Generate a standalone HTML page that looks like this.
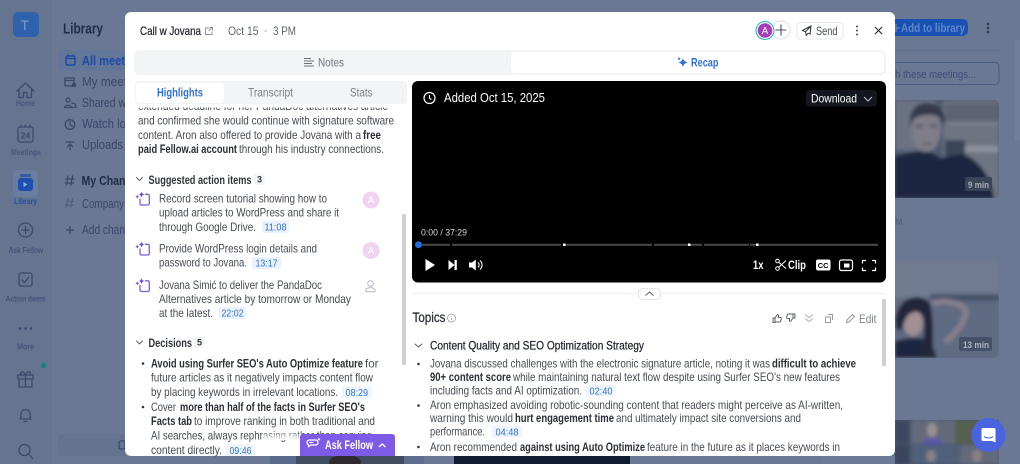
<!DOCTYPE html>
<html><head><meta charset="utf-8"><title>Call w Jovana</title>
<style>
html,body{margin:0;padding:0;width:1020px;height:464px;overflow:hidden;background:#6a7893}
svg{display:block;font-family:"Liberation Sans",sans-serif}
.b{font-size:11.8px;fill:#464b53}
.k{font-size:11.8px;fill:#2b2f36;font-weight:700}
.c{font-size:10px;fill:#2f73d9}
.s{font-size:11.8px;fill:#30343b;font-weight:700}
.r{font-size:8.500px;fill:#45557a;font-weight:700}
.n{font-size:12.500px;fill:#38476a}
.i{fill:none;stroke:#3b4a6c;stroke-width:1.3;stroke-linecap:round;stroke-linejoin:round}
.m{fill:none;stroke:#5a5f68;stroke-width:1;stroke-linecap:round;stroke-linejoin:round}
.p{fill:none;stroke:#7a5be6;stroke-width:1.3;stroke-linecap:round;stroke-linejoin:round}
.w{fill:none;stroke:#fff;stroke-width:1.2;stroke-linecap:round;stroke-linejoin:round}
.h{stroke-width:.25}
</style></head><body>
<svg width="1020" height="464" viewBox="0 0 1020 464" xmlns="http://www.w3.org/2000/svg">
<defs>
<filter id="bl" x="-20%" y="-20%" width="140%" height="140%"><feGaussianBlur stdDeviation="1.800"/></filter>
<clipPath id="t1"><rect x="800" y="100" width="199" height="98" rx="5"/></clipPath>
<clipPath id="t2"><rect x="800" y="260" width="199" height="98" rx="5"/></clipPath>
<clipPath id="t3"><rect x="800" y="420" width="199" height="44"/></clipPath>
<clipPath id="lc"><rect x="125" y="107.500" width="277" height="349"/></clipPath>
<clipPath id="rc"><rect x="412" y="300" width="470" height="156"/></clipPath>
<linearGradient id="fd" x1="0" y1="0" x2="0" y2="1"><stop offset="0" stop-color="#fff" stop-opacity="0"/><stop offset="1" stop-color="#fff"/></linearGradient>
</defs>

<!-- background -->
<rect width="1020" height="464" fill="#6a7893"/>
<rect width="52" height="464" fill="#65748f"/>

<!-- rail -->
<rect x="13" y="12" width="26" height="25" rx="5" fill="#2f62ad"/>
<text x="20.500" y="30" font-size="14" fill="#7f9bc9">T</text>
<path class="i" d="M17 91l8.500-8 8.500 8M19 89v8.500h4.500v-5h3.500v5h4.500V89"/>
<text class="r" x="16" y="106" textLength="19" lengthAdjust="spacingAndGlyphs">Home</text>
<rect x="18" y="127" width="15" height="15" rx="2" class="i"/>
<path class="i" d="M21 125v2M25.500 125v2M30 125v2"/>
<text x="25.500" y="138.500" font-size="8.500" fill="#3b4a6c" text-anchor="middle" font-weight="700">24</text>
<text class="r" x="11" y="155" textLength="30" lengthAdjust="spacingAndGlyphs">Meetings</text>
<rect x="13" y="170" width="25" height="27" rx="5" fill="#6a7ca0"/>
<rect x="18" y="178" width="15" height="13" rx="3" fill="#1d4fae"/>
<rect x="20" y="174" width="11" height="3" rx="1" fill="#3a5b9c"/>
<path d="M23.500 182v5l4-2.500z" fill="#8fb0e8"/>
<text x="14" y="204" font-size="8.500" fill="#1f4ea8" font-weight="700" textLength="23" lengthAdjust="spacingAndGlyphs">Library</text>
<circle cx="25.500" cy="230" r="7" class="i"/><path class="i" d="M25.500 226.500v7M22 230h7"/>
<text class="r" x="8.500" y="253" textLength="34.500" lengthAdjust="spacingAndGlyphs">Ask Fellow</text>
<rect x="19" y="273" width="13" height="13" rx="2" class="i"/><path class="i" d="M22 280l2.500 2.500 4-5"/>
<text class="r" x="5.500" y="301.500" textLength="40" lengthAdjust="spacingAndGlyphs">Action items</text>
<circle cx="20" cy="328.500" r="1.300" fill="#3b4a6c"/><circle cx="25.500" cy="328.500" r="1.300" fill="#3b4a6c"/><circle cx="31" cy="328.500" r="1.300" fill="#3b4a6c"/>
<text class="r" x="17" y="349.500" textLength="17" lengthAdjust="spacingAndGlyphs">More</text>
<circle cx="43.500" cy="365.500" r="2.700" fill="#148578"/>
<path class="i" d="M18 375h15v4H18zM19 379v8h13v-8M25.500 375v12M25.500 375c-2-5-7-3-4 0M25.500 375c2-5 7-3 4 0"/>
<path class="i" d="M20 419c1-1 1-2 1-5a4.500 4.500 0 0 1 9 0c0 3 0 4 1 5zM24 421.500h3"/>
<circle cx="24.500" cy="450" r="5.500" class="i"/><path class="i" d="M28.500 454l4 4.500"/>

<!-- library column -->
<text x="63" y="33.500" font-size="14.500" font-weight="700" fill="#1f2c4a" textLength="40" lengthAdjust="spacingAndGlyphs">Library</text>
<rect x="58" y="50" width="67" height="21" rx="5" fill="#627699"/>
<rect x="66" y="56" width="9" height="9" rx="1.500" fill="none" stroke="#1c4aa3" stroke-width="1.400"/>
<path d="M66 58.500h9M68 54.500v2M73 54.500v2" stroke="#1c4aa3" stroke-width="1.200"/>
<text x="82" y="65" font-size="12.500" font-weight="700" fill="#1c4aa3" textLength="46" lengthAdjust="spacingAndGlyphs">All meeti</text>
<path class="i" d="M65 78h9v8h-9zM65 80.500h9"/><circle cx="74" cy="85" r="2.300" fill="#3b4a6c"/>
<text class="n" x="82" y="86" textLength="45" lengthAdjust="spacingAndGlyphs">My meet</text>
<circle cx="68" cy="100" r="2" class="i"/><path class="i" d="M64.500 107.500c0-3 7-3 7 0zM72 103c3 0 4 2 4 4.500h-4"/>
<text class="n" x="82" y="107" textLength="44" lengthAdjust="spacingAndGlyphs">Shared w</text>
<circle cx="70" cy="124.500" r="4.800" class="i"/><path class="i" d="M70 121.500v3.500l2.300 1.300"/>
<text class="n" x="82" y="128" textLength="44" lengthAdjust="spacingAndGlyphs">Watch lo</text>
<path class="i" d="M66 142h8M70 150v-6M67.500 146.500l2.500-2.500 2.500 2.500"/>
<text class="n" x="82" y="149" textLength="41" lengthAdjust="spacingAndGlyphs">Uploads</text>
<path class="i" d="M68 176l-1.500 9M72.500 176l-1.500 9M65.500 179h8.500M65 183h8.500" stroke-width="1.400"/>
<text x="81.500" y="185" font-size="12.500" font-weight="700" fill="#1f2c4a" textLength="44" lengthAdjust="spacingAndGlyphs">My Chan</text>
<path d="M68 198.500l-1.500 9M72.500 198.500l-1.500 9M65.500 201.500h8.500M65 205h8.500" fill="none" stroke="#52617f" stroke-width="1.200"/>
<text class="n" x="82" y="208" textLength="42" lengthAdjust="spacingAndGlyphs">Company</text>
<path class="i" d="M70 226.500v7M66.500 230h7"/>
<text class="n" x="82" y="234" textLength="43" lengthAdjust="spacingAndGlyphs">Add chan</text>
<rect x="58" y="434" width="70" height="22" rx="4" fill="#65748e"/>
<rect x="119" y="441" width="6" height="8" rx="1.500" class="i"/>

<!-- right background -->
<rect x="880" y="19" width="88" height="17" rx="5" fill="#1a52b4"/>
<text x="901" y="32" font-size="11.500" font-weight="700" fill="#5f86c8" textLength="64" lengthAdjust="spacingAndGlyphs">Add to library</text>
<path d="M896 24v8M892 28h8" stroke="#5f86c8" stroke-width="1.300"/>
<circle cx="988" cy="24" r="1.300" fill="#2c3a58"/><circle cx="988" cy="28" r="1.300" fill="#2c3a58"/><circle cx="988" cy="32" r="1.300" fill="#2c3a58"/>
<rect x="895" y="50" width="105" height="1" fill="#63718c"/>
<rect x="880" y="62.500" width="119" height="22" rx="4" fill="#6a7893" stroke="#475d85" stroke-width="1"/>
<text x="895" y="78" font-size="11" fill="#3b4e76" textLength="81" lengthAdjust="spacingAndGlyphs">h these meetings...</text>
<rect x="1015" y="40" width="5" height="100" fill="#707e98"/>

<!-- thumb 1 -->
<g clip-path="url(#t1)">
<rect x="800" y="100" width="199" height="98" fill="#4e5a70"/>
<g filter="url(#bl)">
<rect x="895" y="100" width="40" height="50" fill="#6a7284"/>
<rect x="943" y="100" width="56" height="98" fill="#6d7482"/>
<rect x="945" y="103" width="54" height="20" fill="#5d6472"/>
<rect x="945" y="122" width="54" height="3" fill="#7d838f"/>
<rect x="962" y="146" width="37" height="6" fill="#8c929c"/>
<rect x="945" y="140" width="20" height="30" fill="#3a4458"/>
<path d="M895 198v-42c10-2 20-4 32-6l13 8 22-4c18 5 30 26 32 44z" fill="#1f2740"/>
<ellipse cx="926" cy="130" rx="15" ry="22" fill="#7e7d88"/>
<path d="M910 128c-2-20 8-25 17-25s20 5 18 25c-2-12-8-13-17-13s-16 2-18 13z" fill="#343b4e"/>
<rect x="916" y="125" width="7" height="2" fill="#3c4150"/><rect x="930" y="125" width="7" height="2" fill="#3c4150"/>
<rect x="923" y="143" width="9" height="2" fill="#565462"/>
</g>
<rect x="965" y="177" width="27" height="14" rx="2" fill="#3a4458"/>
<text x="968" y="188" font-size="9.500" font-weight="700" fill="#a9aeb9" textLength="21" lengthAdjust="spacingAndGlyphs">9 min</text>
</g>
<text x="895" y="225" font-size="9" fill="#4c5c80">M</text>

<!-- thumb 2 -->
<g clip-path="url(#t2)">
<rect x="800" y="260" width="199" height="98" fill="#6b7890"/>
<g filter="url(#bl)">
<rect x="895" y="260" width="104" height="38" fill="#6f7b92"/>
<rect x="895" y="298" width="104" height="62" fill="#5f6b83"/>
<rect x="930" y="294" width="69" height="7" fill="#465269"/>
<path d="M895 358v-17c12-4 26-4 36 0l6 17z" fill="#1f2840"/>
<ellipse cx="913" cy="322" rx="10" ry="14" fill="#a08f93"/>
<path d="M897 330c-5-15 4-33 20-33 10 1 13 5 14 10 3 16 2 35 1 50h-9c-2-10 2-22 1-32 0-8-4-15-10-13-8 2-10 10-12 18z" fill="#23273a"/>
<path d="M932 303c13-3 27-1 33 6 3 9-8 24-20 33" fill="none" stroke="#857f8c" stroke-width="6"/>
</g>
<rect x="959" y="337" width="33" height="14" rx="2" fill="#465169"/>
<text x="963" y="348" font-size="9.500" font-weight="700" fill="#aeb3bd" textLength="26" lengthAdjust="spacingAndGlyphs">13 min</text>
</g>

<!-- thumb 3 grid -->
<g clip-path="url(#t3)">
<rect x="895" y="420" width="104" height="44" fill="#4a5670"/>
<g filter="url(#bl)">
<rect x="895" y="420" width="15" height="24" fill="#3d4a62"/>
<rect x="911" y="420" width="44" height="24" fill="#646a7c"/>
<rect x="955" y="420" width="44" height="24" fill="#55604f"/>
<rect x="895" y="445" width="15" height="19" fill="#3a455c"/>
<rect x="911" y="445" width="48" height="19" fill="#50607a"/>
<rect x="960" y="445" width="39" height="19" fill="#636a7a"/>
<ellipse cx="932" cy="430" rx="5" ry="7" fill="#9a8f92"/>
<path d="M922 444c3-8 18-8 22 0z" fill="#5a55a8"/>
<ellipse cx="931" cy="456" rx="5" ry="6" fill="#8a8085"/>
<ellipse cx="977" cy="456" rx="5" ry="6" fill="#8a8085"/>
</g>
</g>
<!-- bottom strip behind modal -->
<rect x="270" y="456" width="26" height="8" fill="#5a6a8a"/>
<rect x="296" y="456" width="108" height="8" fill="#424c60"/>
<ellipse cx="345" cy="462" rx="16" ry="7" fill="#2f2a30"/>
<rect x="404" y="456" width="20" height="8" fill="#5d6d8e"/>
<rect x="454" y="456" width="176" height="8" fill="#0f1a33"/>
<rect x="822" y="456" width="73" height="8" fill="#6c7a96"/>

<!-- modal -->
<rect x="125" y="12" width="770" height="444" rx="6" fill="#fff"/>

<!-- header -->
<text class="h" x="140" y="35" font-size="12" fill="#24282f" stroke="#24282f" textLength="61" lengthAdjust="spacingAndGlyphs">Call w Jovana</text>
<path d="M209 28h-3.500v6.500h6.500v-3M208.500 31l3.500-3.500M209.500 27.500h3v3" fill="none" stroke="#8b9097" stroke-width=".9"/>
<text x="228" y="35" font-size="12" fill="#60656d" textLength="30.500" lengthAdjust="spacingAndGlyphs">Oct 15</text>
<circle cx="265.500" cy="31" r="1" fill="#c3c6cb"/>
<text x="273" y="35" font-size="12" fill="#60656d" textLength="23" lengthAdjust="spacingAndGlyphs">3 PM</text>

<circle cx="781" cy="30" r="9" fill="#fff" stroke="#dfe1e5"/>
<path d="M775.500 30h11M781 24.500v11" stroke="#4b5058" stroke-width="1.100"/>
<circle cx="765" cy="30.500" r="9.500" fill="#2bb8b0"/>
<circle cx="765" cy="30.500" r="8.400" fill="#fff"/>
<circle cx="765" cy="30.500" r="7.300" fill="#a83cbe"/>
<text x="765" y="34.200" font-size="10" fill="#fff" text-anchor="middle">A</text>
<rect x="797" y="22.500" width="46" height="16.500" rx="3.500" fill="#fff" stroke="#e6e8eb"/>
<path d="M811 26l-8.500 4.500 3 1.300.8 3.700 1.800-2.300 2 .8zM805.500 31.800L811 26" fill="none" stroke="#2f333a" stroke-width="1"/>
<text x="816" y="35" font-size="12" fill="#4c5158" textLength="21.500" lengthAdjust="spacingAndGlyphs">Send</text>
<circle cx="857" cy="26.500" r="1" fill="#41464d"/><circle cx="857" cy="30.500" r="1" fill="#41464d"/><circle cx="857" cy="34.500" r="1" fill="#41464d"/>
<path d="M875 27l7 7M882 27l-7 7" stroke="#30343b" stroke-width="1.200"/>

<!-- main tabs -->
<rect x="134" y="50" width="752" height="25" rx="5" fill="#f3f4f6"/>
<rect x="511" y="52" width="373" height="21" rx="4" fill="#fff"/>
<path d="M304 58.500h7M304 61h10M304 63.500h8M304 66h10" stroke="#6a6f77" stroke-width="1"/>
<text x="318" y="66.500" font-size="12" fill="#70757d" textLength="26" lengthAdjust="spacingAndGlyphs">Notes</text>
<path d="M683 58c.6 2.500 1.700 3.700 4.500 4.500-2.800.8-3.900 2-4.500 4.500-.6-2.500-1.700-3.700-4.500-4.500 2.800-.8 3.900-2 4.500-4.500z" fill="#2f6fd8"/>
<path d="M679 57.500v2.500M677.800 58.800h2.500" stroke="#2f6fd8"/>
<text x="691" y="66.500" font-size="11.800" fill="#2f6fd8" font-weight="700" textLength="27.500" lengthAdjust="spacingAndGlyphs">Recap</text>

<!-- sub tabs -->
<rect x="135" y="81" width="272" height="23" rx="4" fill="#f3f4f6"/>
<rect x="136" y="83" width="88" height="20" rx="4" fill="#fff"/>
<text x="157" y="96.500" font-size="12" fill="#2f6fd8" font-weight="700" textLength="46" lengthAdjust="spacingAndGlyphs">Highlights</text>
<text x="248" y="96.500" font-size="12" fill="#7a7f87" textLength="45" lengthAdjust="spacingAndGlyphs">Transcript</text>
<text x="350" y="96.500" font-size="12" fill="#7a7f87" textLength="22.500" lengthAdjust="spacingAndGlyphs">Stats</text>

<!-- left content -->
<g clip-path="url(#lc)">
<text class="b" x="138" y="110" textLength="250" lengthAdjust="spacingAndGlyphs">extended deadline for her PandaDoc alternatives article</text>
<text class="b" x="138" y="124.500" textLength="256" lengthAdjust="spacingAndGlyphs">and confirmed she would continue with signature software</text>
<text class="b" x="138" y="139" textLength="223" lengthAdjust="spacingAndGlyphs">content. Aron also offered to provide Jovana with a</text>
<text class="k" x="363" y="139" textLength="18" lengthAdjust="spacingAndGlyphs">free</text>
<text class="k" x="138" y="153" textLength="99" lengthAdjust="spacingAndGlyphs">paid Fellow.ai account</text>
<text class="b" x="239" y="153" textLength="145" lengthAdjust="spacingAndGlyphs">through his industry connections.</text>

<path class="m" d="M136.500 177.500l3 3 3-3" stroke="#3f444b"/>
<text class="s" x="148.500" y="184" textLength="103" lengthAdjust="spacingAndGlyphs">Suggested action items</text>
<rect x="254" y="174" width="11" height="11" rx="2" fill="#f4f5f6"/>
<text x="259.500" y="182.500" font-size="9" fill="#30343b" font-weight="700" text-anchor="middle">3</text>

<g id="ai1"><path class="p" d="M145.500 194.300h2.300a1.500 1.500 0 0 1 1.500 1.500v7.700a1.500 1.500 0 0 1-1.500 1.500h-6.300a1.500 1.500 0 0 1-1.500-1.500v-4.500"/><path d="M141.500 191.500c.4 1.800 1.200 2.600 3 3-1.800.4-2.600 1.200-3 3-.4-1.800-1.200-2.600-3-3 1.800-.4 2.600-1.200 3-3z" fill="#6d4fe0"/><path d="M135.800 196.800h3M137.300 195.300v3" stroke="#6d4fe0" stroke-width="1"/></g>
<text class="b" x="159" y="202.500" textLength="168" lengthAdjust="spacingAndGlyphs">Record screen tutorial showing how to</text>
<text class="b" x="159" y="216.500" textLength="180" lengthAdjust="spacingAndGlyphs">upload articles to WordPress and share it</text>
<text class="b" x="159" y="231" textLength="97" lengthAdjust="spacingAndGlyphs">through Google Drive.</text>
<rect x="262" y="220.500" width="27" height="12.500" rx="2" fill="#eaf2fd"/>
<text class="c" x="264.500" y="230.500" textLength="22" lengthAdjust="spacingAndGlyphs">11:08</text>
<circle cx="371" cy="200" r="8.500" fill="#eed4ee"/>
<text x="371" y="203.500" font-size="10" fill="#fff" text-anchor="middle">A</text>

<use href="#ai1" y="50"/>
<text class="b" x="159" y="252.500" textLength="158" lengthAdjust="spacingAndGlyphs">Provide WordPress login details and</text>
<text class="b" x="159" y="266.500" textLength="88" lengthAdjust="spacingAndGlyphs">password to Jovana.</text>
<rect x="252" y="257" width="29" height="12" rx="2" fill="#eaf2fd"/>
<text class="c" x="255.500" y="266.500" textLength="22" lengthAdjust="spacingAndGlyphs">13:17</text>
<circle cx="371" cy="250.500" r="8.500" fill="#eed4ee"/>
<text x="371" y="254" font-size="10" fill="#fff" text-anchor="middle">A</text>

<use href="#ai1" y="86.500"/>
<text class="b" x="159" y="289" textLength="163" lengthAdjust="spacingAndGlyphs">Jovana Simić to deliver the PandaDoc</text>
<text class="b" x="159" y="303" textLength="192" lengthAdjust="spacingAndGlyphs">Alternatives article by tomorrow or Monday</text>
<text class="b" x="159" y="317" textLength="54" lengthAdjust="spacingAndGlyphs">at the latest.</text>
<rect x="219" y="307" width="27" height="12" rx="2" fill="#eaf2fd"/>
<text class="c" x="221.500" y="316.500" textLength="22" lengthAdjust="spacingAndGlyphs">22:02</text>
<circle cx="370.500" cy="283.500" r="2.800" fill="none" stroke="#b6b9be"/>
<path d="M365.800 291.800v-1.500c0-1.500 1.500-2.500 4.700-2.500s4.700 1 4.700 2.500v1.500z" fill="none" stroke="#b6b9be"/>

<path class="m" d="M136.500 341l3 3 3-3" stroke="#3f444b"/>
<text class="s" x="148.500" y="347" textLength="43.500" lengthAdjust="spacingAndGlyphs">Decisions</text>
<rect x="194" y="337" width="11" height="11" rx="2" fill="#f4f5f6"/>
<text x="199.500" y="345.500" font-size="9" fill="#30343b" font-weight="700" text-anchor="middle">5</text>

<circle cx="143" cy="363.500" r="1.300" fill="#30343b"/>
<text class="k" x="151" y="367.500" textLength="212" lengthAdjust="spacingAndGlyphs">Avoid using Surfer SEO's Auto Optimize feature</text>
<text class="b" x="365" y="367.500" textLength="13.500" lengthAdjust="spacingAndGlyphs">for</text>
<text class="b" x="151" y="381.500" textLength="222" lengthAdjust="spacingAndGlyphs">future articles as it negatively impacts content flow</text>
<text class="b" x="151" y="396" textLength="187" lengthAdjust="spacingAndGlyphs">by placing keywords in irrelevant locations.</text>
<rect x="342" y="386" width="30" height="12.500" rx="2" fill="#f0f5fc"/>
<text class="c" x="345.500" y="396" textLength="22.500" lengthAdjust="spacingAndGlyphs">08:29</text>
<circle cx="143" cy="407" r="1.300" fill="#30343b"/>
<text class="b" x="151" y="411" textLength="25" lengthAdjust="spacingAndGlyphs">Cover</text>
<text class="k" x="180" y="411" textLength="185" lengthAdjust="spacingAndGlyphs">more than half of the facts in Surfer SEO's</text>
<text class="k" x="151" y="425" textLength="41" lengthAdjust="spacingAndGlyphs">Facts tab</text>
<text class="b" x="194" y="425" textLength="181" lengthAdjust="spacingAndGlyphs">to improve ranking in both traditional and</text>
<text class="b" x="151" y="439.500" textLength="221" lengthAdjust="spacingAndGlyphs">AI searches, always rephrasing rather than copying</text>
<text class="b" x="151" y="454" textLength="71" lengthAdjust="spacingAndGlyphs">content directly.</text>
<rect x="226" y="444" width="29" height="12" rx="2" fill="#f0f5fc"/>
<text class="c" x="229.500" y="454" textLength="22" lengthAdjust="spacingAndGlyphs">09:46</text>
</g>
<rect x="402" y="214" width="4" height="151" rx="1" fill="#cfd0d2"/>

<!-- video -->
<rect x="412" y="81" width="474" height="201.500" rx="6" fill="#000"/>
<circle cx="429.500" cy="98" r="5.500" fill="none" stroke="#fff" stroke-width="1.200"/>
<path d="M429.500 95v3.300l2 1.200" fill="none" stroke="#fff" stroke-width="1.100"/>
<text x="444" y="102" font-size="12.500" fill="#fff" textLength="101" lengthAdjust="spacingAndGlyphs">Added Oct 15, 2025</text>
<rect x="806" y="90" width="71" height="16.500" rx="4" fill="#14181e"/>
<text x="811" y="102.500" font-size="11.800" fill="#fff" textLength="46" lengthAdjust="spacingAndGlyphs">Download</text>
<path d="M864 97l4 4 4-4" fill="none" stroke="#bfc2c6" stroke-width="1"/>
<text x="421" y="235.500" font-size="9.500" fill="#d8d8d8" textLength="46" lengthAdjust="spacingAndGlyphs">0:00 / 37:29</text>
<g fill="#4a4a4a">
<rect x="418" y="243.800" width="32" height="2"/>
<rect x="452" y="243.800" width="109" height="2"/>
<rect x="565" y="243.800" width="87" height="2"/>
<rect x="654" y="243.800" width="48" height="2"/>
<rect x="704" y="243.800" width="45" height="2"/>
<rect x="750" y="243.800" width="128" height="2"/>
</g>
<rect x="563" y="243.500" width="2.500" height="2.500" fill="#fff"/>
<rect x="688" y="243.500" width="2.500" height="2.500" fill="#fff"/>
<rect x="756" y="243.500" width="2.500" height="2.500" fill="#fff"/>
<circle cx="418.500" cy="244.700" r="3.500" fill="#2268e0"/>
<path d="M425.500 259v12l9.500-6z" fill="#fff"/>
<path d="M448.500 260v10l6-5z" fill="#fff"/><rect x="454.500" y="260" width="2.300" height="10" fill="#fff"/>
<path d="M469 262.500h3l3.800-3v11l-3.800-3h-3z" fill="#fff"/>
<path d="M478 262.500c1.500 1.500 1.500 3.500 0 5M480 260.500c2.700 2.500 2.700 6.500 0 9" fill="none" stroke="#fff" stroke-width="1.100"/>
<text x="753" y="269" font-size="11.500" font-weight="700" fill="#fff" textLength="10.500" lengthAdjust="spacingAndGlyphs">1x</text>
<circle cx="777.500" cy="261" r="1.800" fill="none" stroke="#fff"/><circle cx="777.500" cy="268.500" r="1.800" fill="none" stroke="#fff"/>
<path d="M779 262.500l7 6M779 267l7-6.500" stroke="#fff" stroke-width="1"/>
<text x="788" y="269" font-size="11.800" font-weight="700" fill="#fff" textLength="18" lengthAdjust="spacingAndGlyphs">Clip</text>
<rect x="816" y="259.500" width="14.500" height="11" rx="2" fill="#fff"/>
<text x="823.200" y="268" font-size="7.500" font-weight="700" fill="#000" text-anchor="middle">CC</text>
<rect x="839.500" y="260" width="13" height="10.500" rx="2" fill="none" stroke="#fff" stroke-width="1.200"/>
<rect x="844" y="263.500" width="5.500" height="4" fill="#fff"/>
<path d="M862.500 263.500v-3h3.500M872 260.500h3.500v3M875.500 267.500v3H872M866 270.500h-3.500v-3" fill="none" stroke="#fff" stroke-width="1.200"/>

<!-- divider -->
<rect x="412" y="292.800" width="474" height="1" fill="#eceef0"/>
<rect x="638.500" y="288.500" width="22" height="11" rx="4" fill="#fff" stroke="#e3e5e8"/>
<path d="M645.500 295.500l4-3.500 4 3.500" fill="none" stroke="#5a5f68" stroke-width="1"/>

<!-- topics -->
<text class="h" x="412.500" y="322" font-size="13.500" fill="#2b2f36" stroke="#2b2f36" textLength="33" lengthAdjust="spacingAndGlyphs">Topics</text>
<circle cx="451.500" cy="318" r="4" fill="none" stroke="#9a9ea5" stroke-width=".8"/>
<path d="M451.500 316v.6M451.500 317.500v2.500" stroke="#9a9ea5" stroke-width=".8"/>
<path class="m" d="M773 318h2v4.500h-2zM775 318l2.500-3.500c1 0 1.200 1 1 2l-.3 1h2.300c.7 0 1 .5.800 1.200l-.7 2.800c-.1.400-.4.500-.8.500H775"/>
<path class="m" d="M795 318h-2v-4h2zM793 318l-2.500 3.500c-1 0-1.200-1-1-2l.3-1h-2.300c-.7 0-1-.5-.8-1.200l.7-2.800c.1-.4.400-.5.800-.5h4.800"/>
<path d="M805 314.500l4 3 4-3M805 318.500l4 3 4-3" fill="none" stroke="#a6aab0" stroke-width=".9"/>
<path d="M828 314.500h4.500v5.500M825.500 317h5v5.500h-5z" fill="none" stroke="#92969c" stroke-width=".9"/>
<path d="M846.500 322.500l.5-2.500 5.500-5.500 2 2-5.500 5.500z" fill="none" stroke="#8a8e95" stroke-width=".9"/>
<text x="859" y="323" font-size="12" fill="#7d8188" textLength="17.500" lengthAdjust="spacingAndGlyphs">Edit</text>
<rect x="882" y="299" width="4" height="67" fill="#cfd0d2"/>

<!-- right content -->
<g clip-path="url(#rc)">
<path class="m" d="M415 344l3.500 3 3.500-3" stroke="#3f444b"/>
<text class="h" x="430" y="349.500" font-size="11.800" fill="#24282f" stroke="#24282f" textLength="214" lengthAdjust="spacingAndGlyphs">Content Quality and SEO Optimization Strategy</text>
<circle cx="418.500" cy="364" r="1.300" fill="#30343b"/>
<text class="b" x="430" y="367.500" textLength="340" lengthAdjust="spacingAndGlyphs">Jovana discussed challenges with the electronic signature article, noting it was</text>
<text class="k" x="772" y="367.500" textLength="84" lengthAdjust="spacingAndGlyphs">difficult to achieve</text>
<text class="k" x="430" y="381" textLength="81" lengthAdjust="spacingAndGlyphs">90+ content score</text>
<text class="b" x="513" y="381" textLength="327" lengthAdjust="spacingAndGlyphs">while maintaining natural text flow despite using Surfer SEO's new features</text>
<text class="b" x="430" y="394.500" textLength="152" lengthAdjust="spacingAndGlyphs">including facts and AI optimization.</text>
<rect x="586" y="384.500" width="30" height="12" rx="2" fill="#f0f5fc"/>
<text class="c" x="589.500" y="394.500" textLength="23" lengthAdjust="spacingAndGlyphs">02:40</text>
<circle cx="418.500" cy="405.500" r="1.300" fill="#30343b"/>
<text class="b" x="430" y="409" textLength="413" lengthAdjust="spacingAndGlyphs">Aron emphasized avoiding robotic-sounding content that readers might perceive as AI-written,</text>
<text class="b" x="430" y="422" textLength="83" lengthAdjust="spacingAndGlyphs">warning this would</text>
<text class="k" x="515" y="422" textLength="99" lengthAdjust="spacingAndGlyphs">hurt engagement time</text>
<text class="b" x="616" y="422" textLength="185" lengthAdjust="spacingAndGlyphs">and ultimately impact site conversions and</text>
<text class="b" x="430" y="435.500" textLength="55" lengthAdjust="spacingAndGlyphs">performance.</text>
<rect x="492" y="425.500" width="30" height="12" rx="2" fill="#f0f5fc"/>
<text class="c" x="495.500" y="435.500" textLength="23" lengthAdjust="spacingAndGlyphs">04:48</text>
<circle cx="418.500" cy="447" r="1.300" fill="#30343b"/>
<text class="b" x="430" y="451" textLength="87" lengthAdjust="spacingAndGlyphs">Aron recommended</text>
<text class="k" x="520" y="451" textLength="125" lengthAdjust="spacingAndGlyphs">against using Auto Optimize</text>
<text class="b" x="647" y="451" textLength="193" lengthAdjust="spacingAndGlyphs">feature in the future as it places keywords in</text>
</g>

<!-- ask fellow -->
<rect x="262" y="431" width="40" height="9" fill="url(#fd)"/>
<path d="M300 456v-19a3 3 0 0 1 3-3h89a3 3 0 0 1 3 3v19z" fill="#7c5ce6"/>
<path class="w" d="M307 442.500a2.500 2.500 0 0 1 2.500-2.500h6c1.500 0 2.500 1 2.500 2.500s-1 2.500-2.500 2.500h-5l-2 2v-2.200c-.8-.4-1.500-1.300-1.500-2.300zM310 442.500h3"/>
<path d="M319 437.500c.2 1 .7 1.500 1.700 1.800-1 .3-1.500.8-1.700 1.800-.2-1-.7-1.500-1.700-1.800 1-.3 1.500-.8 1.700-1.800z" fill="#fff"/>
<text x="325" y="449" font-size="12" font-weight="700" fill="#fff" textLength="48" lengthAdjust="spacingAndGlyphs">Ask Fellow</text>
<path d="M379 447l3.200-3 3.200 3" fill="none" stroke="#fff" stroke-width="1.500"/>

<!-- intercom -->
<circle cx="988.500" cy="435" r="17" fill="#4a63df"/>
<path d="M983 428h11a1.500 1.500 0 0 1 1.500 1.500v13l-3.500-1.500h-9a1.500 1.500 0 0 1-1.500-1.500v-10a1.500 1.500 0 0 1 1.500-1.500z" fill="#fff"/>
<path d="M984 436.500c2.500 2 6.500 2 9 0" fill="none" stroke="#4a63df" stroke-width="1.100"/>
</svg>
</body></html>
